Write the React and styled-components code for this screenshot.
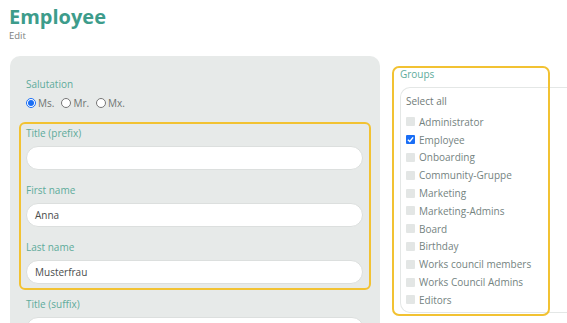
import React from 'react'
import styled, { createGlobalStyle } from 'styled-components'

const GlobalStyle = createGlobalStyle`
  * {
    box-sizing: border-box;
  }
  body {
    margin: 0;
    background: #fff;
    font-family: 'Open Sans', 'Noto Sans', sans-serif;
    overflow: hidden;
  }
`

const Page = styled.div`
  padding: 4px 0 0 9px;
  width: 567px;
  height: 323px;
  overflow: hidden;
`

const Heading = styled.h1`
  margin: 0;
  font-size: 20px;
  line-height: 25px;
  font-weight: 700;
  color: #3d9c8b;
`

const SubHeading = styled.div`
  margin-top: 2px;
  font-size: 9.5px;
  line-height: 10px;
  color: #7c7f7e;
`

const Columns = styled.div`
  display: flex;
  align-items: flex-start;
  gap: 20px;
  margin-top: 15px;
`

const Panel = styled.div`
  width: 370px;
  margin-left: 1px;
  background: #e7eae9;
  border-radius: 10px;
  padding: 21px 16px 20px;
  height: 290px;
`

const Label = styled.div`
  font-size: 10px;
  line-height: 14px;
  color: #5eab9b;
`

const RadioRow = styled.div`
  display: flex;
  gap: 7px;
  margin-top: 5px;
  height: 14px;
  align-items: center;
`

const RadioOption = styled.label`
  display: flex;
  align-items: center;
  gap: 2px;
  font-size: 10px;
  color: #6f7573;
`

const Radio = styled.span`
  width: 10px;
  height: 10px;
  border-radius: 50%;
  border: 1px solid ${p => (p.checked ? '#1a6ef5' : '#767676')};
  background: #fff;
  display: inline-flex;
  align-items: center;
  justify-content: center;
  &::after {
    content: '';
    width: 6px;
    height: 6px;
    border-radius: 50%;
    background: ${p => (p.checked ? '#1a6ef5' : 'transparent')};
  }
`

const Highlight = styled.div`
  margin: 12px -7px 0;
  padding: 2px 6px 4px 5px;
  border: 2px solid #f2c232;
  border-radius: 6px;
`

const Field = styled.div`
  & + & {
    margin-top: 13px;
  }
`

const Input = styled.div`
  margin-top: 6px;
  height: 24px;
  border-radius: 12px;
  background: #fff;
  border: 1px solid #dcdfde;
  padding: 0 8px;
  display: flex;
  align-items: center;
  font-size: 10px;
  color: #4a4d4c;
`

const After = styled.div`
  margin-top: 7px;
`

const GroupsColumn = styled.div`
  position: relative;
  flex: 1;
  margin-top: 11px;
`

const GroupsBox = styled.div`
  margin-top: 6px;
  margin-right: -20px;
  border: 1px solid #e4e7e6;
  border-right: none;
  border-radius: 10px 0 0 10px;
  padding: 6px 5px 6px;
  height: 226px;
`

const SelectAll = styled.div`
  font-size: 10px;
  line-height: 14px;
  color: #6f7a77;
  margin-bottom: 5px;
`

const Item = styled.div`
  display: flex;
  align-items: center;
  gap: 4px;
  height: 17.8px;
  font-size: 10px;
  color: #74837f;
`

const Box = styled.span`
  width: 9px;
  height: 9px;
  border-radius: 1px;
  background: ${p => (p.checked ? '#1a6ef5' : '#e3e6e5')};
  display: inline-flex;
  align-items: center;
  justify-content: center;
  flex-shrink: 0;
`

const GroupsHighlight = styled.div`
  position: absolute;
  left: -8px;
  top: -1px;
  width: 158px;
  height: 250px;
  border: 2px solid #f2c232;
  border-radius: 7px;
  pointer-events: none;
`

const groups = [
  ['Administrator', false],
  ['Employee', true],
  ['Onboarding', false],
  ['Community-Gruppe', false],
  ['Marketing', false],
  ['Marketing-Admins', false],
  ['Board', false],
  ['Birthday', false],
  ['Works council members', false],
  ['Works Council Admins', false],
  ['Editors', false],
]

const App = () => (
  <>
    <GlobalStyle />
    <Page>
      <Heading>Employee</Heading>
      <SubHeading>Edit</SubHeading>
      <Columns>
        <Panel>
          <Label>Salutation</Label>
          <RadioRow>
            <RadioOption><Radio checked />Ms.</RadioOption>
            <RadioOption><Radio />Mr.</RadioOption>
            <RadioOption><Radio />Mx.</RadioOption>
          </RadioRow>
          <Highlight>
            <Field>
              <Label>Title (prefix)</Label>
              <Input />
            </Field>
            <Field>
              <Label>First name</Label>
              <Input>Anna</Input>
            </Field>
            <Field>
              <Label>Last name</Label>
              <Input>Musterfrau</Input>
            </Field>
          </Highlight>
          <After>
            <Label>Title (suffix)</Label>
            <Input />
          </After>
        </Panel>
        <GroupsColumn>
          <Label>Groups</Label>
          <GroupsBox>
            <SelectAll>Select all</SelectAll>
            {groups.map(([name, checked]) => (
              <Item key={name}>
                <Box checked={checked}>
                  {checked && (
                    <svg width="7" height="7" viewBox="0 0 8 8">
                      <path d="M1 4.2 L3.2 6.3 L7 1.5" stroke="#fff" strokeWidth="1.6" fill="none" />
                    </svg>
                  )}
                </Box>
                {name}
              </Item>
            ))}
          </GroupsBox>
          <GroupsHighlight />
        </GroupsColumn>
      </Columns>
    </Page>
  </>
)

export default App
